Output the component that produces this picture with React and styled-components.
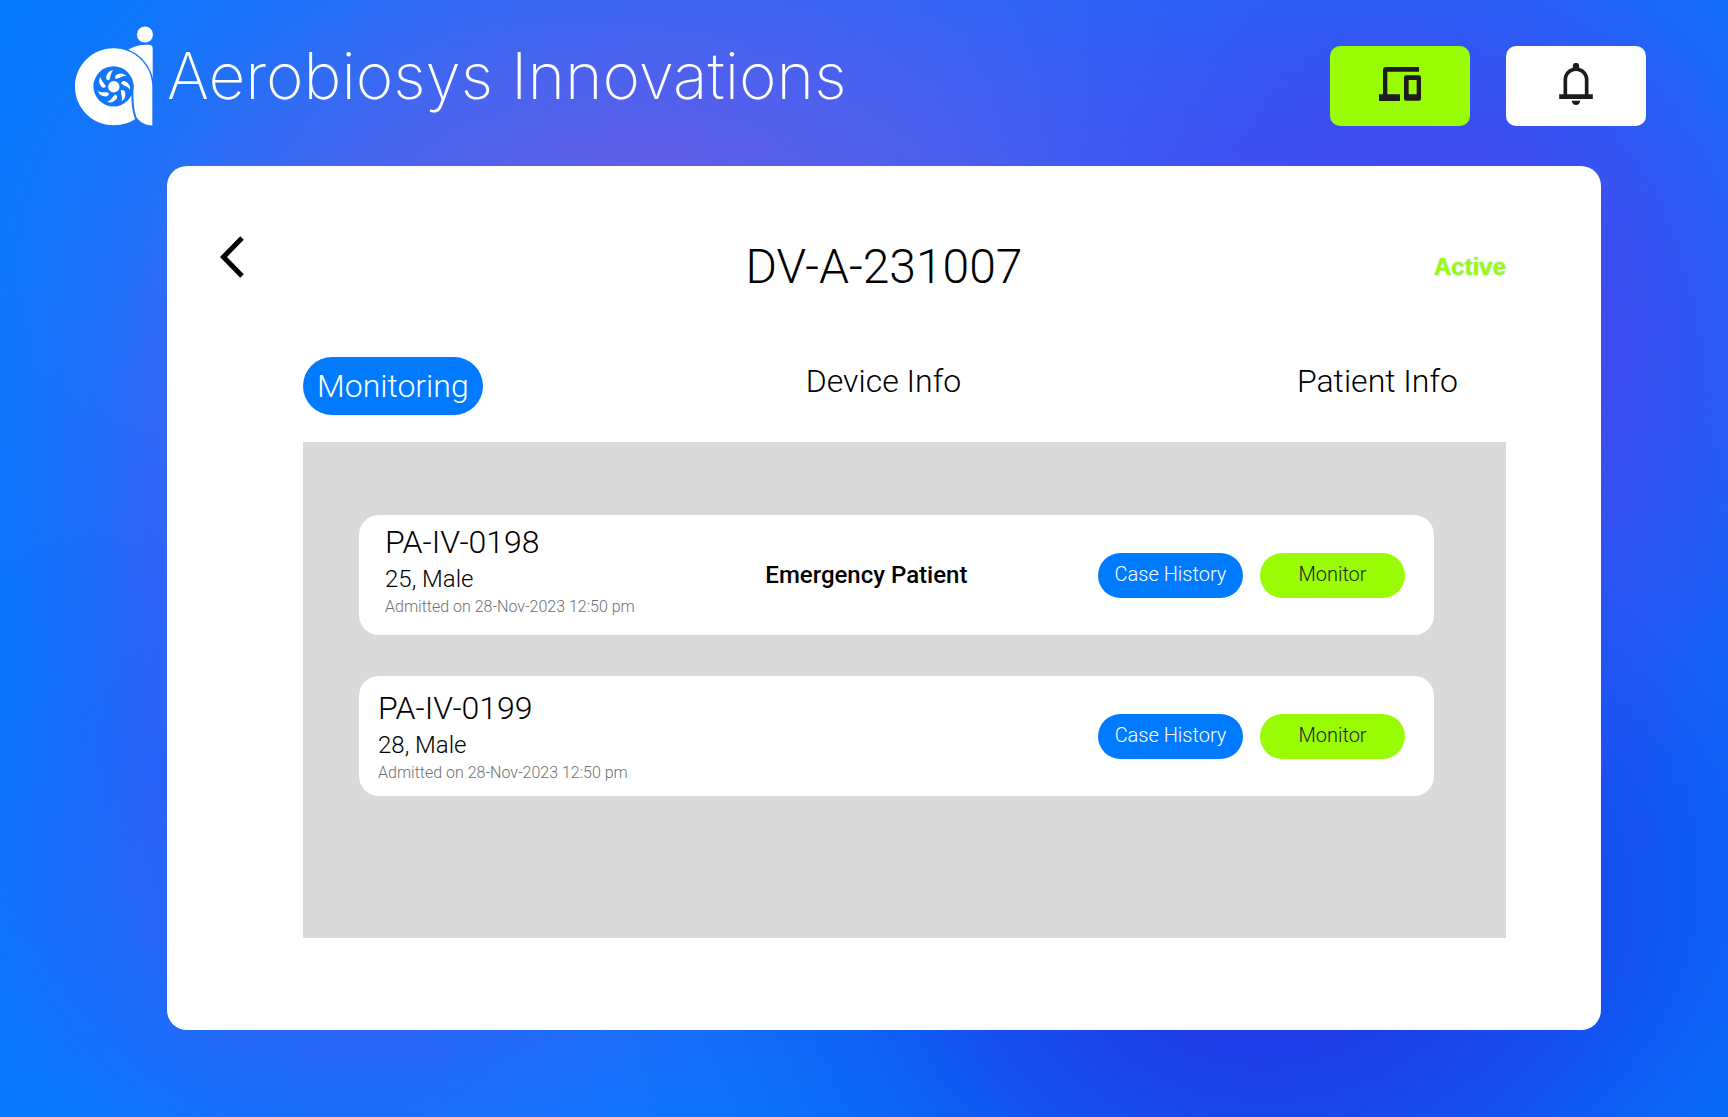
import React, { useState } from 'react';
import styled, { createGlobalStyle, css } from 'styled-components';

const color = {
  blue: '#007bff',
  lime: '#99fc05',
  ink: '#1d1b20',
  muted: '#6f6f6f',
  panel: '#ffffff',
  well: '#d9d9d9',
};

/* Soft colour blob: a radial gradient with a gentle, bell-shaped falloff. */
const glow = (rx, ry, x, y, rgb) =>
  `radial-gradient(${rx}% ${ry}% at ${x}% ${y}%, rgba(${rgb}, 1) 0%, rgba(${rgb}, 0.88) 22%, rgba(${rgb}, 0.6) 45%, rgba(${rgb}, 0.26) 68%, rgba(${rgb}, 0.07) 86%, rgba(${rgb}, 0) 100%)`;

const GlobalStyle = createGlobalStyle`
  *, *::before, *::after { box-sizing: border-box; }
  body {
    margin: 0;
    font-family: Roboto, "Liberation Sans", sans-serif;
    font-weight: 300;
    color: #000;
  }
  h1, h2, h3, p, ul { margin: 0; padding: 0; font-weight: inherit; }
  button { font: inherit; color: inherit; border: 0; padding: 0; cursor: pointer; }
`;

const Page = styled.div`
  min-height: 100vh;
  padding-bottom: 87px;
  background:
    ${glow(38, 46, 73, 85, '32, 56, 230')},
    ${glow(32, 52, 83, 31, '76, 66, 238')},
    ${glow(46, 52, 37, 26, '104, 92, 232')},
    ${glow(24, 50, 18, 60, '52, 90, 246')},
    ${glow(36, 32, 24, 84, '44, 102, 248')},
    ${glow(54, 54, 66, 14, '36, 98, 246')},
    ${glow(50, 50, 86, 70, '12, 98, 248')},
    ${color.blue};
`;

const Header = styled.header`
  display: flex;
  align-items: flex-end;
  justify-content: space-between;
  padding: 26px 82px 40px 75px;
`;

const Brand = styled.div`
  display: flex;
  align-items: center;
  gap: 14px;
  color: #fff;
`;

const BrandName = styled.h1`
  font-family: Inter, sans-serif;
  font-size: 64px;
  font-weight: 200;
  line-height: 80px;
`;

const HeaderActions = styled.div`
  display: flex;
  gap: 36px;
`;

const IconButton = styled.button`
  display: flex;
  align-items: center;
  justify-content: center;
  width: 140px;
  height: 80px;
  padding-bottom: 4px;
  border-radius: 10px;
  color: ${color.ink};
  background: ${(p) => (p.$active ? color.lime : '#fff')};
`;

const Panel = styled.main`
  margin: 0 127px 0 167px;
  padding: 70px 0 92px;
  border-radius: 20px;
  background: ${color.panel};
`;

const PanelHeader = styled.div`
  display: grid;
  grid-template-columns: 1fr auto 1fr;
  align-items: center;
  padding: 0 53px;
`;

const BackButton = styled.button`
  display: flex;
  align-self: start;
  justify-self: start;
  background: none;
`;

const DeviceTitle = styled.h2`
  font-size: 48px;
  line-height: 62px;
`;

const Status = styled.span`
  justify-self: end;
  padding-right: 42px;
  font-family: "Liberation Sans", Arial, sans-serif;
  font-size: 24px;
  font-weight: 700;
  color: ${color.lime};
  text-shadow: 0 0 2px rgba(90, 160, 200, 0.6);
`;

const Content = styled.div`
  padding: 59px 95px 0 136px;
`;

const Tabs = styled.div`
  display: grid;
  grid-template-columns: 1fr auto 1fr;
  align-items: start;
  justify-items: start;
  padding-right: 42px;

  & > :last-child { justify-self: end; }
`;

const Tab = styled.button`
  padding: 0 6px;
  font-size: 32px;
  line-height: 48px;
  background: none;

  ${(p) =>
    p.$selected &&
    css`
      padding: 0 14px;
      line-height: 58px;
      border-radius: 29px;
      color: #fff;
      background: ${color.blue};
    `}
`;

const PatientList = styled.ul`
  display: flex;
  flex-direction: column;
  gap: 41px;
  min-height: 496px;
  margin-top: 27px;
  padding: 73px 72px 73px 56px;
  list-style: none;
  background: ${color.well};
`;

const Card = styled.li`
  display: flex;
  align-items: center;
  justify-content: space-between;
  min-height: 120px;
  padding: 0 29px 0 ${(p) => (p.$flagged ? 26 : 19)}px;
  border-radius: 20px;
  background: #fff;
`;

const Patient = styled.div`
  padding-bottom: ${(p) => (p.$flagged ? 10 : 0)}px;
`;

const PatientId = styled.h3`
  font-size: 32px;
  line-height: 40px;
`;

const PatientDetails = styled.p`
  font-size: 24px;
  line-height: 34px;
`;

const Admitted = styled.p`
  font-size: 16px;
  line-height: 22px;
  color: ${color.muted};
`;

const Flag = styled.p`
  font-size: 24px;
  font-weight: 500;
  line-height: 34px;
`;

const CardActions = styled.div`
  display: flex;
  gap: 17px;
`;

const PillButton = styled.button`
  width: 145px;
  height: 45px;
  padding-bottom: 2px;
  border-radius: 23px;
  font-size: 20px;
  color: ${(p) => (p.$primary ? '#fff' : color.ink)};
  background: ${(p) => (p.$primary ? color.blue : color.lime)};
`;

const BLADES = [0, 1, 2, 3, 4, 5, 6];

function Logo() {
  return (
    <svg width="78" height="100" viewBox="45 48 233 298" fill="currentColor" aria-hidden="true">
      <mask id="bowl-cut" maskUnits="userSpaceOnUse" x="45" y="48" width="233" height="298">
        <rect x="45" y="48" width="233" height="298" fill="#fff" />
        <circle cx="160" cy="228" r="60" fill="#000" />
        <path d="M217 222C215 262 216 302 229 328" fill="none" stroke="#000" strokeWidth="6" />
      </mask>
      <mask id="head-cut" maskUnits="userSpaceOnUse" x="45" y="48" width="233" height="298">
        <rect x="45" y="48" width="233" height="298" fill="#fff" />
        <circle cx="158" cy="232" r="123" fill="#000" />
      </mask>
      <circle cx="254" cy="73" r="24" />
      <path mask="url(#head-cut)" d="M200 122C220 107 240 104 266 104Q277 104 277 115V210H240Z" />
      <g mask="url(#bowl-cut)">
        <path d="M160 114C224 114 276 165 276 229V345C256 345 240 336 230 322C212 337 188 344 160 344C97 344 45 293 45 229S97 114 160 114Z" />
      </g>
      <g transform="translate(161 229)">
        <circle r="17" />
        {BLADES.map((i) => (
          <path
            key={i}
            transform={`rotate(${(i * 360) / BLADES.length})`}
            d="M-14-19C-20-19-24-23-23-29C-20-42-12-49-2-49C-10-41-9-30-14-19Z"
          />
        ))}
      </g>
    </svg>
  );
}

function DevicesIcon() {
  return (
    <svg width="42" height="34" viewBox="0 0 126 102" fill="currentColor" aria-hidden="true">
      <path d="M0 82H12V10Q12 0 22 0H120V14H25V82H63V102H0Z" />
      <path
        fillRule="evenodd"
        d="M81 25H120Q126 25 126 31V95Q126 101 120 101H81Q75 101 75 95V31Q75 25 81 25ZM89 39V82H113V39Z"
      />
    </svg>
  );
}

function BellIcon() {
  return (
    <svg width="34" height="42" viewBox="0 0 101 126" fill="currentColor" aria-hidden="true">
      <path
        fillRule="evenodd"
        d="M0 94H13V50C13 32 25 18 41 14V9A9.500 9.500 0 0 1 60 9V14C76 18 88 32 88 50V94H101V108H0ZM24 94H77V50C77 35 65 24 50.500 24S24 35 24 50Z"
      />
      <path d="M38 113H63C63 121 57 126 50.500 126S38 121 38 113Z" />
    </svg>
  );
}

function BackIcon() {
  return (
    <svg width="24" height="42" viewBox="0 0 24 42" fill="none" stroke="currentColor" strokeWidth="5" aria-hidden="true">
      <path d="M22 2L3.500 21L22 40" />
    </svg>
  );
}

const TABS = ['Monitoring', 'Device Info', 'Patient Info'];

const PATIENTS = [
  { id: 'PA-IV-0198', details: '25, Male', admitted: '28-Nov-2023 12:50 pm', flag: 'Emergency Patient' },
  { id: 'PA-IV-0199', details: '28, Male', admitted: '28-Nov-2023 12:50 pm' },
];

function PatientCard({ patient }) {
  const flagged = Boolean(patient.flag);
  return (
    <Card $flagged={flagged}>
      <Patient $flagged={flagged}>
        <PatientId>{patient.id}</PatientId>
        <PatientDetails>{patient.details}</PatientDetails>
        <Admitted>Admitted on {patient.admitted}</Admitted>
      </Patient>
      {flagged && <Flag>{patient.flag}</Flag>}
      <CardActions>
        <PillButton type="button" $primary>Case History</PillButton>
        <PillButton type="button">Monitor</PillButton>
      </CardActions>
    </Card>
  );
}

export default function App() {
  const [tab, setTab] = useState(TABS[0]);
  return (
    <>
      <GlobalStyle />
      <Page>
        <Header>
          <Brand>
            <Logo />
            <BrandName>Aerobiosys Innovations</BrandName>
          </Brand>
          <HeaderActions>
            <IconButton type="button" $active aria-label="Devices"><DevicesIcon /></IconButton>
            <IconButton type="button" aria-label="Notifications"><BellIcon /></IconButton>
          </HeaderActions>
        </Header>
        <Panel>
          <PanelHeader>
            <BackButton type="button" aria-label="Back"><BackIcon /></BackButton>
            <DeviceTitle>DV-A-231007</DeviceTitle>
            <Status>Active</Status>
          </PanelHeader>
          <Content>
            <Tabs role="tablist">
              {TABS.map((name) => (
                <Tab
                  key={name}
                  type="button"
                  role="tab"
                  aria-selected={tab === name}
                  $selected={tab === name}
                  onClick={() => setTab(name)}
                >
                  {name}
                </Tab>
              ))}
            </Tabs>
            <PatientList>
              {PATIENTS.map((patient) => (
                <PatientCard key={patient.id} patient={patient} />
              ))}
            </PatientList>
          </Content>
        </Panel>
      </Page>
    </>
  );
}
